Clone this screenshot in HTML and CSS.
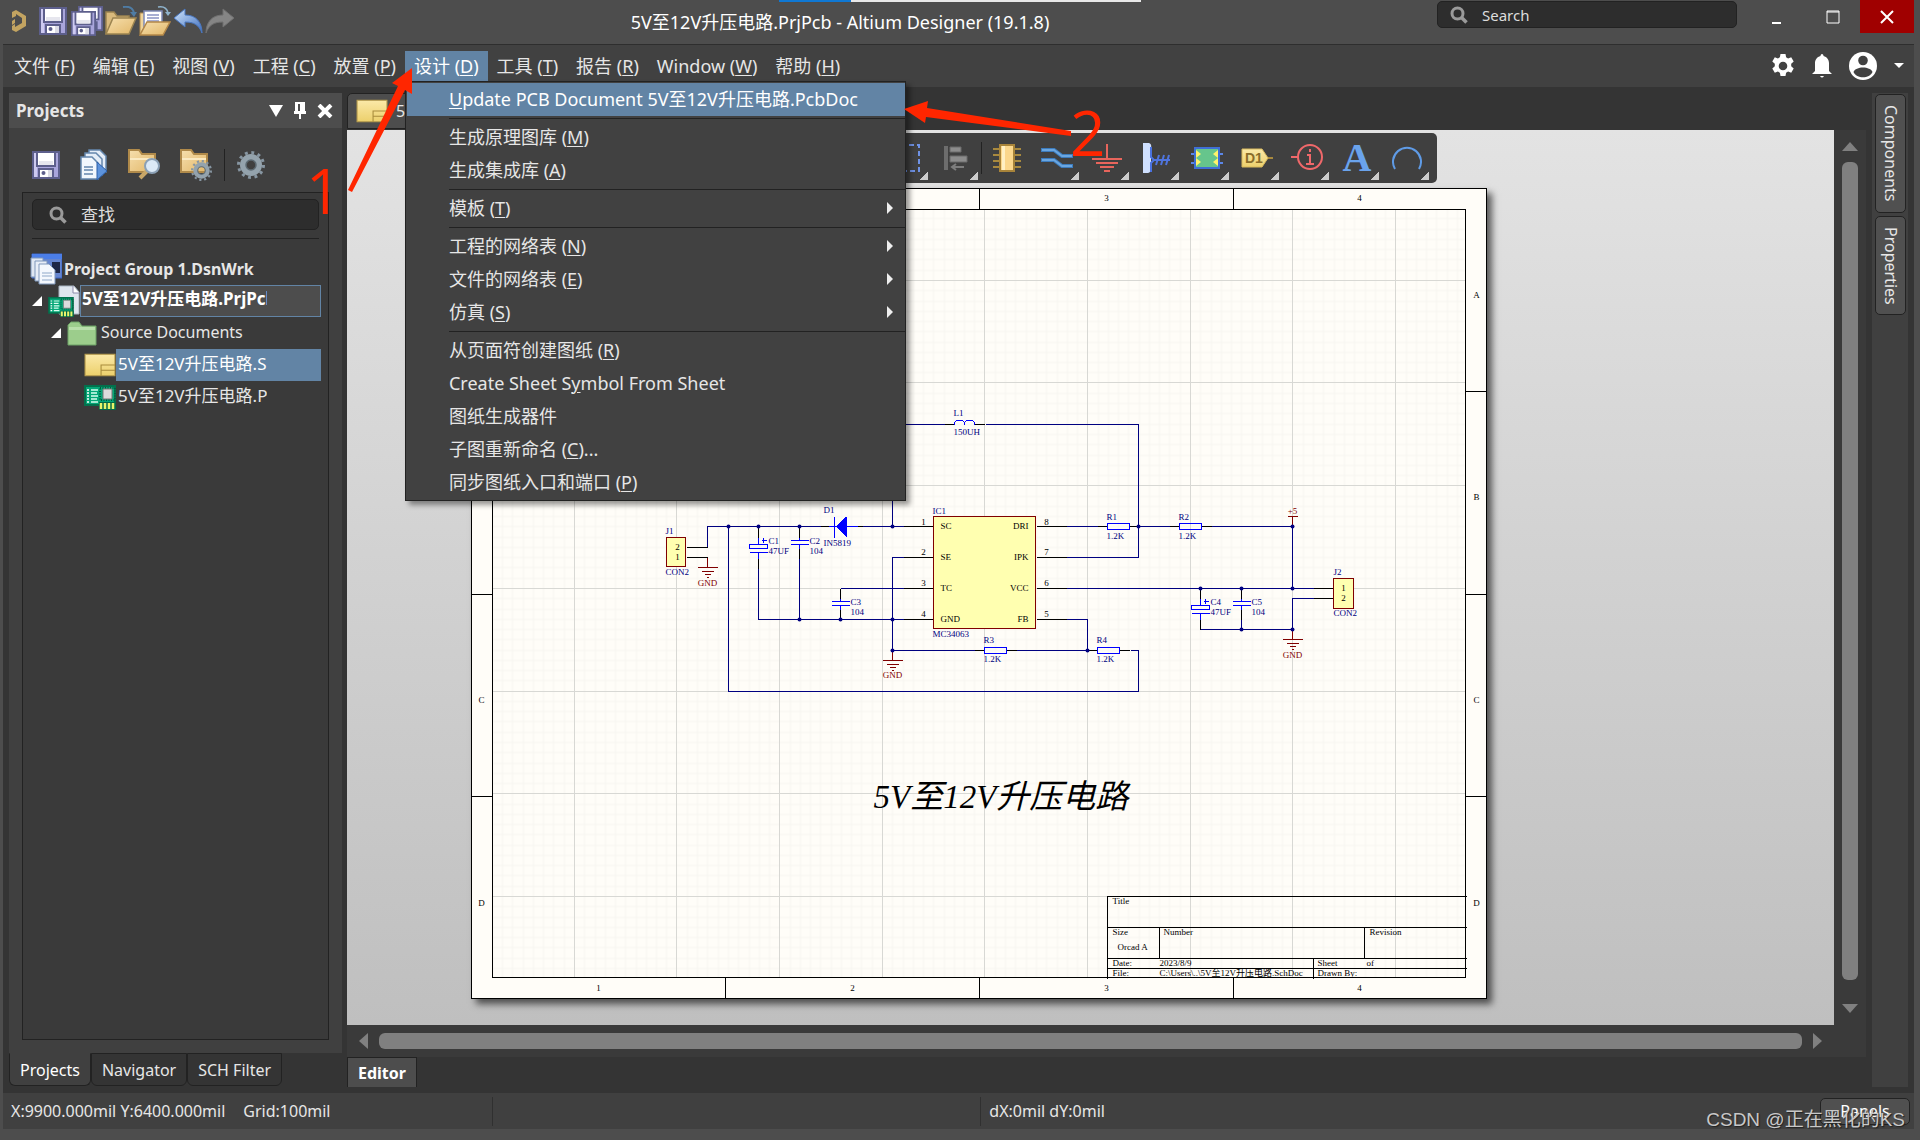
FILE: index.html
```html
<!DOCTYPE html>
<html lang="zh-CN">
<head>
<meta charset="utf-8">
<title>5V至12V升压电路.PrjPcb - Altium Designer (19.1.8)</title>
<link rel="stylesheet" href="styles.css">
</head>
<body>
<svg class="defs" aria-hidden="true">
  <defs>
    <linearGradient id="lilac" x2="1" y2="1"><stop offset="0" stop-color="#c9c6ee"/><stop offset="1" stop-color="#8d89c8"/></linearGradient>
    <linearGradient id="sand" x2="1" y2="1"><stop offset="0" stop-color="#f6dfae"/><stop offset="1" stop-color="#e2b768"/></linearGradient>
    <linearGradient id="gold" x2="0" y2="1"><stop offset="0" stop-color="#fbe9a8"/><stop offset="1" stop-color="#ecd06c"/></linearGradient>
    <linearGradient id="sky" x2="1" y2="1"><stop offset="0" stop-color="#cfe4fb"/><stop offset="1" stop-color="#3f6fc0"/></linearGradient>
    <symbol id="i-save" viewBox="0 0 28 28">
      <path d="M1 1h26v26H1z" fill="#a9a5dc" stroke="#5d5f8c" stroke-width="2"/>
      <path d="M2 2h3v24H2z" fill="#cdcaf0"/>
      <path d="M5 1h18v14H5z" fill="#fff" stroke="#5d5f8c" stroke-width="2"/>
      <path d="M7 10h14v4H7z" fill="#e6e6ee"/>
      <path d="M7 18h14v9H7z" fill="#fff" stroke="#5d5f8c" stroke-width="2"/>
      <path d="M16 19h4v7h-4z" fill="#dcdce6"/><circle cx="11.500" cy="22" r="2" fill="#5d5f8c"/>
    </symbol>
    <symbol id="i-gear" viewBox="0 0 28 28">
      <circle cx="14" cy="14" r="12.500" fill="none" stroke="#8796a2" stroke-width="3" stroke-dasharray="2.900 3.640"/>
      <circle cx="14" cy="14" r="8" fill="none" stroke="#94a3ad" stroke-width="6"/>
      <circle cx="14" cy="14" r="5" fill="none" stroke="#5d6a72" stroke-width="1.500"/>
    </symbol>
    <symbol id="i-folder" viewBox="0 0 28 24">
      <path d="M1 23V1h10l3 4h13v18z" fill="url(#sand)" stroke="#b08a4a" stroke-width="2"/>
      <path d="M2 9h24v2H2z" fill="#fbeac2"/>
    </symbol>
    <symbol id="i-search" viewBox="0 0 18 18">
      <circle cx="7.500" cy="7.500" r="5.500" fill="none" stroke="#9a9a9a" stroke-width="3"/>
      <path d="M11 11l5.500 5.500" stroke="#9a9a9a" stroke-width="3.500"/>
    </symbol>
    <symbol id="i-sch" viewBox="0 0 30 22">
      <path d="M1 1h28v20H1z" fill="url(#gold)" stroke="#bb9f4e" stroke-width="1"/>
      <path d="M16 21V11h13M16 16h13" fill="none" stroke="#a98c3c" stroke-width="1"/>
    </symbol>
    <symbol id="i-pcb" viewBox="0 0 32 25">
      <path d="M1 1h30v19H1z" fill="#05a777" stroke="#03704c" stroke-width="2"/>
      <path d="M3 5h2M3 8h2M3 11h2M3 14h2M3 17h2" stroke="#fff" stroke-width="1.500"/>
      <path d="M7 5h7M7 8h6M7 11h7M7 14h6M7 17h7" stroke="#d8fff0" stroke-width="1.500"/>
      <path d="M16 3h15v12H16z" fill="none" stroke="#035a3e" stroke-width="2" stroke-dasharray="1 1.500"/>
      <path d="M19 4h9v10h-9z" fill="#dcdcdc" stroke="#777"/>
      <path d="M15 17h17v8H15z" fill="#046b49"/>
      <path d="M17 18v6M21 18v6M25 18v6M29 18v6" stroke="#e9f56a" stroke-width="2.500"/>
    </symbol>
    <pattern id="grid" x="266" y="280" width="308" height="308" patternUnits="userSpaceOnUse">
      <path class="grid-minor" d="M10 0v308M21 0v308M31 0v308M41 0v308M51 0v308M62 0v308M72 0v308M82 0v308M92 0v308M113 0v308M123 0v308M133 0v308M144 0v308M154 0v308M164 0v308M175 0v308M185 0v308M195 0v308M216 0v308M226 0v308M236 0v308M246 0v308M257 0v308M267 0v308M277 0v308M287 0v308M298 0v308M0 10h308M0 21h308M0 31h308M0 41h308M0 51h308M0 62h308M0 72h308M0 82h308M0 92h308M0 113h308M0 123h308M0 133h308M0 144h308M0 154h308M0 164h308M0 175h308M0 185h308M0 195h308M0 216h308M0 226h308M0 236h308M0 246h308M0 257h308M0 267h308M0 277h308M0 287h308M0 298h308"/>
    </pattern>
    <g id="gnd"><path d="M0-10V0M-10 0h20M-6 4h12M-3 7h6M-1 10h2"/></g>
    <g id="res"><path class="pin" d="M-10 0H0M22 0h10"/><path class="part" d="M0-3h22v6H0z"/></g>
    <g id="cap"><path class="pin" d="M0 0v10M0 20v11"/><path class="part" d="M0 10v3M-9 13h18M-9 17h18M0 17v4"/></g>
    <g id="ecap"><path class="pin" d="M0 0v10M0 30v11"/><path class="part" d="M0 10v7M-9 17H9v4H-9zM-9 25H9M0 25v6M3 13h5M5 10v5"/></g>
  </defs>
</svg>

<div class="other-window"></div>

<header class="titlebar">
  <div class="quick">
    <svg class="logo" viewBox="0 0 16 24"><path d="M1 9V3l4-2 10 6v10L5 23l-4-2v-4l3-2v3l7-4V9L5 5v2z" fill="#c3a461"/><path d="M1 12l3-2v4l-3 2z" fill="#c3a461"/></svg>
    <button class="save" aria-label="保存"><svg width="28" height="28"><use href="#i-save"/></svg></button>
    <button aria-label="全部保存"><svg width="32" height="30"><use href="#i-save" x="7" y="0" width="25" height="25"/><use href="#i-save" x="0" y="5" width="25" height="25"/></svg></button>
    <button aria-label="打开"><svg width="32" height="30" viewBox="0 0 32 30"><path d="M1 28V6h8l3 4h12v6" fill="#d9ba7c" stroke="#9c8450" stroke-width="1.500"/><path d="M1 28l7-16h23l-7 16z" fill="url(#sand)" stroke="#9c8450" stroke-width="1.500"/><path d="M18 1c7-1 10 1 11 6" fill="none" stroke="#4f7ca4" stroke-width="2"/><path d="M25 6h7l-3 5z" fill="#4f7ca4"/></svg></button>
    <button aria-label="打开工程"><svg width="32" height="30" viewBox="0 0 32 30"><path d="M1 28V7h6v10" fill="#f0d49a" stroke="#b08a4a"/><path d="M5 5h18v20H5z" fill="#fff" stroke="#7d89b5" stroke-width="1.500"/><path d="M8 9h12M8 12h12M8 15h12" stroke="#8a94c4" stroke-width="1.500"/><path d="M1 29l7-13h23l-7 13z" fill="url(#sand)" stroke="#b48848" stroke-width="1.500"/><path d="M19 1c6-1 9 1 10 6" fill="none" stroke="#8fb3cc" stroke-width="1.500"/><path d="M26 6h6l-3 4z" fill="#8fb3cc"/></svg></button>
    <button aria-label="撤销"><svg width="30" height="26" viewBox="0 0 30 26"><path d="M1 10L12 1v6c11 0 17 7 17 18-3-8-8-11-17-11v5z" fill="url(#sky)" stroke="#4a78c2"/></svg></button>
    <button aria-label="重做"><svg width="30" height="26" viewBox="0 0 30 26"><path d="M29 10L18 1v6C7 7 1 14 1 25c3-8 8-11 17-11v5z" fill="#858585" stroke="#707070"/></svg></button>
  </div>
  <h1 class="window-title">5V至12V升压电路.PrjPcb - Altium Designer (19.1.8)</h1>
  <label class="search search-top"><svg width="18" height="18"><use href="#i-search"/></svg><input type="text" placeholder="Search" aria-label="Search"></label>
  <div class="window-buttons">
    <button aria-label="最小化"><svg width="14" height="24"><path d="M1 18h9" stroke="#fff" stroke-width="2"/></svg></button>
    <button aria-label="最大化"><svg width="14" height="14"><path d="M1 1h12v12H1z" fill="none" stroke="#fff" stroke-width="1"/><path d="M1 2h12" stroke="#fff"/></svg></button>
    <button class="close" aria-label="关闭"><svg width="14" height="14"><path d="M1 1l12 12M13 1L1 13" stroke="#fff" stroke-width="2"/></svg></button>
  </div>
</header>

<nav class="menubar">
  <ul class="menus">
    <li><button>文件 (<u>F</u>)</button></li>
    <li><button>编辑 (<u>E</u>)</button></li>
    <li><button>视图 (<u>V</u>)</button></li>
    <li><button>工程 (<u>C</u>)</button></li>
    <li><button>放置 (<u>P</u>)</button></li>
    <li class="open"><button aria-expanded="true">设计 (<u>D</u>)</button>
      <ul class="dropdown">
        <li><button class="active"><u>U</u>pdate PCB Document 5V至12V升压电路.PcbDoc</button></li>
        <li class="rule"></li>
        <li><button>生成原理图库 (<u>M</u>)</button></li>
        <li><button>生成集成库 (<u>A</u>)</button></li>
        <li class="rule"></li>
        <li><button class="sub">模板 (<u>T</u>)</button></li>
        <li class="rule"></li>
        <li><button class="sub">工程的网络表 (<u>N</u>)</button></li>
        <li><button class="sub">文件的网络表 (<u>E</u>)</button></li>
        <li><button class="sub">仿真 (<u>S</u>)</button></li>
        <li class="rule"></li>
        <li><button>从页面符创建图纸 (<u>R</u>)</button></li>
        <li><button>Create Sheet S<u>y</u>mbol From Sheet</button></li>
        <li><button>图纸生成器件</button></li>
        <li><button>子图重新命名 (<u>C</u>)...</button></li>
        <li><button>同步图纸入口和端口 (<u>P</u>)</button></li>
      </ul>
    </li>
    <li><button>工具 (<u>T</u>)</button></li>
    <li><button>报告 (<u>R</u>)</button></li>
    <li><button>Window (<u>W</u>)</button></li>
    <li><button>帮助 (<u>H</u>)</button></li>
  </ul>
  <div class="account">
    <button aria-label="设置"><svg width="24" height="24" viewBox="0 0 24 24"><path fill="#fff" fill-rule="evenodd" d="M9.500 0h5l.6 3.300 2 1.100 3.100-1.200 2.500 4.300-2.500 2.200v2.600l2.500 2.200-2.500 4.300-3.100-1.200-2 1.100-.6 3.300h-5l-.6-3.300-2-1.100-3.100 1.200-2.500-4.300 2.500-2.200V9.700L1.300 7.500l2.500-4.300 3.100 1.200 2-1.100zM12 7.700a4.300 4.300 0 1 0 0 8.600 4.300 4.300 0 0 0 0-8.600z"/></svg></button>
    <button aria-label="通知"><svg width="20" height="24" viewBox="0 0 20 24"><path d="M10 0c1 0 1.500 1 1.500 2C15 3 17 6 17 9v8l3 3H0l3-3V9c0-3 2-6 5.500-7 0-1 .5-2 1.500-2zM8 22h4q-2 3-4 0z" fill="#fff"/></svg></button>
    <button aria-label="账户"><svg width="28" height="28" viewBox="0 0 28 28"><circle cx="14" cy="14" r="14" fill="#fff"/><circle cx="14" cy="8.500" r="4.800" fill="#414141"/><path d="M4.500 20c2-6 17-6 19 0-3 7-16 7-19 0z" fill="#414141"/></svg></button>
    <button aria-label="账户菜单"><svg width="10" height="6"><path d="M0 0h10L5 5z" fill="#fff"/></svg></button>
  </div>
</nav>

<main class="workspace">
  <aside class="side">
    <section class="panel">
      <header class="panel-head"><h2>Projects</h2>
        <button aria-label="选项"><svg width="14" height="12"><path d="M0 0h14L7 12z" fill="#fff"/></svg></button>
        <button aria-label="固定"><svg width="12" height="18"><path d="M1 0h10v9h1v3H7v5H5v-5H0V9h1zM4 2v7h2V2z" fill="#fff" fill-rule="evenodd"/></svg></button>
        <button aria-label="关闭"><svg width="16" height="14"><path d="M2 1l12 12M14 1L2 13" stroke="#fff" stroke-width="4"/></svg></button>
      </header>
      <div class="panel-tools">
        <button aria-label="保存"><svg width="28" height="28"><use href="#i-save"/></svg></button>
        <button aria-label="编译"><svg width="28" height="32" viewBox="0 0 28 32"><path d="M9 1h11l6 6v16H9z" fill="#e4edf8" stroke="#6487ad" stroke-width="1.500"/><path d="M5 4h11l6 6v16H5z" fill="#e4edf8" stroke="#6487ad" stroke-width="1.500"/><path d="M1 8h11l6 6v16H1z" fill="#f2f7fd" stroke="#6487ad" stroke-width="1.500"/><path d="M4 18h9M4 21h9M4 25h9" stroke="#6487ad" stroke-width="1.500"/><path d="M17 13l10 9-10 9z" fill="#5d93dc" stroke="#2b5ea8"/></svg></button>
        <button aria-label="查找文件"><svg width="32" height="32"><use href="#i-folder" width="28" height="24"/><path d="M12 29l7-7" stroke="#c9a768" stroke-width="4"/><circle cx="24" cy="17" r="7" fill="#dbe9f6" stroke="#8ba0b5" stroke-width="2"/></svg></button>
        <button aria-label="工程选项"><svg width="32" height="32"><use href="#i-folder" width="28" height="24"/><use href="#i-gear" x="11" y="11" width="21" height="21"/></svg></button>
        <span class="tool-rule"></span>
        <button aria-label="设置"><svg width="28" height="28"><use href="#i-gear"/></svg></button>
      </div>
      <div class="panel-body">
        <label class="search"><svg width="18" height="18"><use href="#i-search"/></svg><input type="text" placeholder="查找" aria-label="查找"></label>
        <ul class="tree">
          <li class="root"><svg width="32" height="32" viewBox="0 0 32 32"><path d="M2 1h30v24H2z" fill="#6585cf" stroke="#3a64c8"/><path d="M2 1h30v5H2z" fill="#4b7ee8"/><path d="M22 9h8v11h-8z" fill="#1d2747"/><path d="M1 5h12v19H1z" fill="#dfe7f2" stroke="#7f97bb"/><path d="M5 8h12v20H5z" fill="#e8eef7" stroke="#7f97bb"/><path d="M9 11h10l6 6v14H9z" fill="#f4f8fd" stroke="#7f97bb"/><path d="M12 20h10M12 23h10M12 27h10" stroke="#8fa8c8"/></svg><b>Project Group 1.DsnWrk</b></li>
          <li class="project"><svg class="twist" width="10" height="10"><path d="M10 0v10H0z" fill="#fff"/></svg><svg width="32" height="32" viewBox="0 0 32 32"><path d="M11 1h15l5 6v22H11z" fill="#dfe6ee" stroke="#a8b4c0"/><path d="M25 1v7h6" fill="#fff" stroke="#8b8baa"/><use href="#i-pcb" y="12" width="26" height="20"/></svg><span class="name"><b class="clip">5V至12V升压电路.PrjPcb</b></span></li>
          <li class="folder"><svg class="twist" width="10" height="10"><path d="M10 0v10H0z" fill="#fff"/></svg><svg width="30" height="25" viewBox="0 0 30 25"><path d="M1 24V4l3-3h8l3 4h14v19z" fill="#9ccd8c" stroke="#6da166"/><path d="M2 6h26v3H2z" fill="#b9dfab"/></svg><span class="name">Source Documents</span></li>
          <li class="doc selected"><svg width="32" height="24"><use href="#i-sch" width="32" height="24"/></svg><span class="name"><span class="clip">5V至12V升压电路.SchDoc</span></span></li>
          <li class="doc"><svg width="32" height="25"><use href="#i-pcb" width="32" height="25"/></svg><span class="name"><span class="clip">5V至12V升压电路.PcbDoc</span></span></li>
        </ul>
      </div>
    </section>
    <div class="panel-tabs"><button class="current">Projects</button><button>Navigator</button><button>SCH Filter</button></div>
  </aside>

  <section class="editor">
    <div class="doc-tabs"><button><svg width="32" height="24"><use href="#i-sch" width="32" height="24"/></svg><span>5V至12V升压电路.SchDoc</span></button></div>
    <div class="view">
      <div class="canvas">
        <svg class="sheet" width="1016" height="811" viewBox="470.500 187.500 1016 811" role="img" aria-label="5V至12V升压电路">
          <path d="M471 188h1015v810H471z" fill="#fffdf8" stroke="#000"/>
          <path d="M492 209h973v768H492z" fill="url(#grid)"/>
          <path class="grid-major" d="M574 209v768M676 209v768M779 209v768M882 209v768M984 209v768M1087 209v768M1190 209v768M1292 209v768M1395 209v768M492 280h973M492 382h973M492 485h973M492 588h973M492 691h973M492 793h973M492 896h973"/>
          <path class="ink" d="M492 209h973v768H492zM725 188v21M979 188v21M1233 188v21M725 977v21M979 977v21M1233 977v21M471 391h21M471 594h21M471 796h21M1465 391h21M1465 594h21M1465 796h21"/>
          <path class="ink" d="M1107 978V896h359M1107 927h359M1107 958h359M1107 968h359M1159 927v31M1364 927v31M1313 958v20"/>
          <g class="black mid">
            <text x="598" y="200">1</text><text x="852" y="200">2</text><text x="1106" y="200">3</text><text x="1359" y="200">4</text>
            <text x="598" y="990">1</text><text x="852" y="990">2</text><text x="1106" y="990">3</text><text x="1359" y="990">4</text>
            <text x="481" y="297">A</text><text x="481" y="499">B</text><text x="481" y="702">C</text><text x="481" y="905">D</text>
            <text x="1476" y="297">A</text><text x="1476" y="499">B</text><text x="1476" y="702">C</text><text x="1476" y="905">D</text>
          </g>
          <g class="black">
            <text x="1112" y="903">Title</text><text x="1112" y="934">Size</text><text x="1163" y="934">Number</text><text x="1369" y="934">Revision</text><text x="1117" y="949">Orcad A</text>
            <text x="1112" y="965">Date:</text><text x="1159" y="965">2023/8/9</text><text x="1317" y="965">Sheet</text><text x="1366" y="965">of</text>
            <text x="1112" y="975">File:</text><text x="1159" y="975">C:\Users\..\5V至12V升压电路.SchDoc</text><text x="1317" y="975">Drawn By:</text>
          </g>
          <path class="wire" d="M700 424h244M985 424h153v133h-72M892 424v102M707 547v-21h113M728 526v165h410v-41h-8M758 567v52h145M799 557v62M860 526h43M903 557h-11v93h83M840 588h63M1016 650h71v-31h-21M1066 526h31M1138 526h32M1211 526h81v62M1066 588h247M1313 598h-21v31h-92M1241 619v10"/>
          <path class="pin" d="M686 547h21M686 557h21M820 526h10M857 526h5M903 526h30M903 557h30M903 588h30M903 619h30M1036 526h30M1036 557h30M1036 588h30M1036 619h30M944 424h10M974 424h10M1313 588h20M1313 598h20"/>
          <path class="part" d="M828 526h29M834 516v21"/><path d="M835 526l11-10v21z" fill="#00f"/>
          <path d="M954 424c0-6 10-6 10 0c0-6 10-6 10 0" fill="none" stroke="#00f"/>
          <use href="#res" x="984" y="650"/><use href="#res" x="1107" y="526"/><use href="#res" x="1179" y="526"/><use href="#res" x="1097" y="650"/>
          <use href="#cap" x="799" y="527"/><use href="#cap" x="840" y="588"/><use href="#cap" x="1241" y="588"/>
          <use href="#ecap" x="758" y="527"/><use href="#ecap" x="1200" y="588"/>
          <g class="body"><path d="M933 516h102v112H933z"/><path d="M666 537h19v29h-19z"/><path d="M1333 578h20v30h-20z"/></g>
          <g class="power"><use href="#gnd" x="707" y="567"/><use href="#gnd" x="892" y="660"/><use href="#gnd" x="1292" y="639"/><path d="M1292 526v-10M1287 516h10"/></g>
          <g fill="#000080"><circle cx="728" cy="526" r="2"/><circle cx="758" cy="526" r="2"/><circle cx="799" cy="526" r="2"/><circle cx="892" cy="526" r="2"/><circle cx="799" cy="619" r="2"/><circle cx="840" cy="619" r="2"/><circle cx="892" cy="619" r="2"/><circle cx="892" cy="650" r="2"/><circle cx="1138" cy="526" r="2"/><circle cx="1087" cy="650" r="2"/><circle cx="1292" cy="526" r="2"/><circle cx="1200" cy="588" r="2"/><circle cx="1241" cy="588" r="2"/><circle cx="1292" cy="588" r="2"/><circle cx="1241" cy="629" r="2"/><circle cx="1292" cy="629" r="2"/></g>
          <g class="label">
            <text x="665" y="533">J1</text><text x="665" y="574">CON2</text><text x="768" y="543">C1</text><text x="768" y="553">47UF</text><text x="809" y="543">C2</text><text x="809" y="553">104</text>
            <text x="823" y="512">D1</text><text x="823" y="545">IN5819</text><text x="850" y="604">C3</text><text x="850" y="614">104</text>
            <text x="932" y="513">IC1</text><text x="932" y="636">MC34063</text><text x="983" y="642">R3</text><text x="983" y="661">1.2K</text>
            <text x="1106" y="519">R1</text><text x="1106" y="538">1.2K</text><text x="1178" y="519">R2</text><text x="1178" y="538">1.2K</text><text x="1096" y="642">R4</text><text x="1096" y="661">1.2K</text>
            <text x="953" y="415">L1</text><text x="953" y="434">150UH</text><text x="1333" y="574">J2</text><text x="1333" y="615">CON2</text>
            <text x="1210" y="604">C4</text><text x="1210" y="614">47UF</text><text x="1251" y="604">C5</text><text x="1251" y="614">104</text>
          </g>
          <g class="red mid"><text x="707" y="585">GND</text><text x="892" y="677">GND</text><text x="1292" y="657">GND</text><text x="1292" y="513">+5</text></g>
          <g class="black">
            <text x="940" y="528">SC</text><text x="940" y="559">SE</text><text x="940" y="590">TC</text><text x="940" y="621">GND</text>
          </g>
          <g class="black end"><text x="1028" y="528">DRI</text><text x="1028" y="559">IPK</text><text x="1028" y="590">VCC</text><text x="1028" y="621">FB</text></g>
          <g class="black mid">
            <text x="923" y="524">1</text><text x="923" y="554">2</text><text x="923" y="585">3</text><text x="923" y="616">4</text>
            <text x="1046" y="524">8</text><text x="1046" y="554">7</text><text x="1046" y="585">6</text><text x="1046" y="616">5</text>
            <text x="677" y="549">2</text><text x="677" y="559">1</text><text x="1343" y="590">1</text><text x="1343" y="600">2</text>
          </g>
          <text class="caption" x="873" y="807">5V至12V升压电路</text>
        </svg>

        <div class="active-bar">
          <button class="more" aria-label="选择"><svg width="28" height="28"><path d="M1 1h26v26H1z" fill="none" stroke="#6f92e6" stroke-width="2" stroke-dasharray="5 3"/></svg></button>
          <button class="more" aria-label="对齐"><svg width="24" height="26"><path d="M0 1h4v24H0z" fill="#6d6d6d"/><path d="M6 2h11v5H6zM6 11h17v6H6z" fill="#8d8d8d" stroke="#6a6a6a"/><path d="M8 22h12M12 19l-4 3 4 3" fill="none" stroke="#7d7d7d" stroke-width="2"/></svg></button>
          <span class="bar-rule"></span>
          <button aria-label="放置器件"><svg width="28" height="28"><path d="M0 5h28M0 11h28M0 17h28M0 23h28" stroke="#a8893e" stroke-width="2"/><path d="M7 1h14v26H7z" fill="#fbd78c" stroke="#a8843a" stroke-width="2"/><path d="M9 2h3v24H9z" fill="#fff0c4"/></svg></button>
          <button class="more" aria-label="放置线"><svg width="32" height="22"><path d="M0 3h13l8 6h11M0 13h13l8 6h11" fill="none" stroke="#3d7cbd" stroke-width="4"/><path d="M1 3h12l8 6h10M1 13h12l8 6h10" fill="none" stroke="#6aa6e0" stroke-width="2"/></svg></button>
          <button class="more" aria-label="放置地"><svg width="30" height="28"><path d="M15 0v14M0 15h30M4 19h22M8 23h14M12 27h6" stroke="#e8655c" stroke-width="2"/></svg></button>
          <button class="more" aria-label="线束"><svg width="28" height="30"><path d="M0 0h6q3 1 2 5v21q0 3-3 4H0z" fill="#cfe0ff"/><path d="M8 4v10l3 3-3 3v9" fill="none" stroke="#4a72e0" stroke-width="2"/><path d="M10 17h17M16 12l-3 10M21 12l-3 10M26 12l-3 10" stroke="#4f74dd" stroke-width="2"/></svg></button>
          <button class="more" aria-label="图表符"><svg width="32" height="22"><path d="M0 7h32M0 16h32" stroke="#5b86e8" stroke-width="2"/><path d="M4 1h24v20H4z" fill="#66c58c" stroke="#3f6fd6" stroke-width="2"/><path d="M5 3l5 4-5 4 5 4-5 4zM27 3l-5 4 5 4-5 4 5 4z" fill="#fff36b"/></svg></button>
          <button class="more" aria-label="端口"><svg width="32" height="20"><path d="M24 10h8" stroke="#a8893e" stroke-width="2"/><path d="M1 1h20l6 9-6 9H1z" fill="url(#gold)" stroke="#d8b95c"/><text class="port" x="4" y="15">D1</text></svg></button>
          <button class="more" aria-label="指示"><svg width="32" height="28"><circle cx="19" cy="13" r="12" fill="none" stroke="#f0686a" stroke-width="2"/><path d="M0 13h7M19 5v3M16 11h3v9M15 20h8" fill="none" stroke="#f0686a" stroke-width="2"/></svg></button>
          <button class="more letter" aria-label="文本">A</button>
          <button class="more" aria-label="圆弧"><svg width="30" height="24"><path d="M3 23A14 14 0 1 1 27 23" fill="none" stroke="#5f9be6" stroke-width="2"/></svg></button>
        </div>
      </div>
      <div class="scroll vertical"><svg width="16" height="9"><path d="M0 9L8 0l8 9z"/></svg><span class="thumb"></span><svg width="16" height="9"><path d="M0 0h16L8 9z"/></svg></div>
      <div class="scroll horizontal"><svg width="9" height="16"><path d="M9 0v16L0 8z"/></svg><span class="thumb"></span><svg width="9" height="16"><path d="M0 0v16l9-8z"/></svg></div>
    </div>
    <div class="editor-tabs"><button>Editor</button></div>
  </section>

  <aside class="dock"><button>Components</button><button>Properties</button></aside>
</main>

<footer class="status">
  <span>X:9900.000mil Y:6400.000mil</span><span class="grid-size">Grid:100mil</span><span class="delta">dX:0mil dY:0mil</span>
  <button>Panels</button>
</footer>

<svg class="marks" width="840" height="160" viewBox="300 60 840 160" aria-hidden="true">
  <path d="M412 68v26l-7-4-53 102-4-2 50-104-6-3zM904 109l24-8-1 7 144 23v5l-145-19-1 6z"/>
  <text x="306" y="214">1</text><text x="1070" y="156">2</text>
</svg>
<div class="watermark">CSDN @正在黑化的KS</div>
</body>
</html>
```
FILE: styles.css
```css
* { box-sizing: border-box; }

body {
  position: relative;
  display: flex;
  flex-direction: column;
  min-height: 100vh;
  margin: 0;
  padding: 0 6px 11px 3px;
  background: #4d4d4d;
  color: #e6e6e6;
  font: 16px/22px "Noto Sans", "Noto Sans CJK SC", sans-serif;
}

ul { margin: 0; padding: 0; list-style: none; }
h1, h2 { margin: 0; font: inherit; }
svg { display: block; flex: none; }
u { text-decoration-thickness: 1px; text-underline-offset: 2px; }

button {
  padding: 0;
  border: 0;
  background: none;
  color: inherit;
  font: inherit;
  white-space: nowrap;
}

.defs { position: absolute; width: 0; height: 0; }

.other-window {
  position: absolute;
  top: 0;
  left: 779px;
  width: 362px;
  height: 2px;
  background: linear-gradient(90deg, #0f78d4 72px, #e8e8e8 72px);
}

/* title bar */
.titlebar { display: flex; height: 45px; border-bottom: 1px solid #2e2e2e; }
.quick { display: flex; align-items: center; gap: 2px; height: 42px; padding-left: 8px; }
.logo { width: 16px; height: 24px; margin-right: 10px; }
.quick .save { margin-right: 2px; }
.window-title { flex: 1; padding: 11px 0 0 8px; text-align: center; font-size: 18px; color: #fff; }

.search {
  display: flex;
  align-items: center;
  gap: 14px;
  height: 31px;
  padding-left: 16px;
  border: 1px solid #222;
  border-radius: 5px;
  background: #2d2d2d;
}
.search input { flex: 1; min-width: 0; padding: 0; border: 0; outline: 0; background: none; color: #ddd; font: inherit; font-size: 17px; }
.search input::placeholder { color: #ddd; opacity: 1; }
.search-top { width: 300px; height: 27px; margin-top: 1px; padding-left: 12px; }
.search-top input { font-size: 15px; }

.window-buttons { display: flex; height: 33px; padding-left: 13px; }
.window-buttons button { display: grid; place-items: center; width: 55px; }
.window-buttons .close { width: 54px; background: #a00000; }

/* menu bar */
.menubar { display: flex; justify-content: space-between; height: 42px; background: #414141; }
.menus { display: flex; padding: 6px 0 0 2px; font-size: 18px; }
.menus > li > button { height: 30px; padding: 0 9px; line-height: 30px; }
.open { position: relative; }
.open > button { background: #6284a5; color: #fff; }

.dropdown {
  position: absolute;
  z-index: 2;
  top: 30px;
  left: 0;
  width: 501px;
  padding: 1px 0 1px 1px;
  border: 1px solid #222;
  background: #414141;
  box-shadow: 4px 4px 5px rgba(0, 0, 0, .4);
}
.dropdown button { position: relative; display: block; width: 100%; height: 33px; padding: 0 0 2px 42px; text-align: left; }
.dropdown .active { background: #6284a5; color: #fff; }
.dropdown .sub::after {
  content: "";
  position: absolute;
  top: 10px;
  right: 12px;
  border: solid transparent;
  border-width: 6px 0 6px 6px;
  border-left-color: #eee;
}
.rule { height: 1px; margin: 2px 0 2px 42px; background: #222; }

.account { display: flex; align-items: center; gap: 17px; padding-right: 10px; }

/* work area */
.workspace { display: flex; flex: 1; padding: 6px; background: #343434; }
.side { display: flex; flex-direction: column; width: 333px; margin-right: 5px; }
.panel { display: flex; flex: 1; flex-direction: column; padding-bottom: 13px; background: #404040; }
.panel-head { display: flex; align-items: center; gap: 11px; height: 35px; padding: 0 9px 0 7px; background: #4d4d4d; }
.panel-head h2 { flex: 1; font-size: 17px; font-weight: 700; }
.panel-tools { display: flex; align-items: center; height: 64px; padding: 10px 0 0 23px; gap: 20px; }
.tool-rule { width: 1px; height: 32px; margin: 0 -8px; background: #222; }
.panel-body { flex: 1; margin: 0 13px; padding: 6px 9px; border: 1px solid #222; background: #3a3a3a; }

.tree { margin-top: 8px; padding-top: 14px; border-top: 1px solid #222; }
.tree li { display: flex; align-items: center; gap: 2px; height: 32px; margin-right: -2px; white-space: nowrap; }
.tree .name { flex: 1; height: 32px; padding: 3px 2px; line-height: 24px; }
.clip { display: block; width: 149px; overflow: hidden; font-size: 17px; }
.root { margin-left: -2px; }
.tree .project { gap: 0; }
.project svg + svg { margin-left: 6px; }
.tree .project .name { padding: 1px; border: 1px solid #6284a5; background: #4d4d4d; color: #fff; }
.project .clip { width: 185px; }
.folder { margin-left: 19px; }
.folder svg + svg { margin-left: 4px; }
.doc { margin-left: 52px; }
.tree .doc { gap: 0; }
.selected .name { background: #6284a5; color: #fff; }

.panel-tabs { display: flex; height: 34px; }
.panel-tabs button { height: 33px; padding: 0 10px; border: 1px solid #222; border-radius: 0 0 6px 6px; }
.panel-tabs .current { border-top-color: #404040; background: #404040; color: #fff; }

/* schematic editor */
.editor { display: flex; flex: 1; flex-direction: column; min-width: 0; }
.doc-tabs { height: 37px; }
.doc-tabs button { display: flex; align-items: center; gap: 8px; height: 36px; padding: 0 8px; border: 1px solid #222; border-radius: 5px 5px 0 0; background: #4d4d4d; }
.view { display: grid; flex: 1; grid-template: minmax(0, 1fr) 32px / minmax(0, 1fr) 32px; background: #3a3a3a; }
.canvas { position: relative; overflow: hidden; min-height: 880px; background: linear-gradient(#e3e3e3, #bfbfbf); }
.sheet { position: absolute; top: 58px; left: 124px; box-shadow: 5px 5px 7px rgba(0, 0, 0, .6); font: 9px "Liberation Serif", "Noto Sans CJK SC", serif; shape-rendering: crispEdges; }
.sheet circle { shape-rendering: auto; }
.grid-minor, .grid-major, .ink, .wire, .pin, .part { fill: none; stroke-width: 1; }
.grid-minor { stroke: #f6f5f0; }
.grid-major { stroke: #d8d8d4; }
.ink, .pin { stroke: #000; }
.wire { stroke: #000080; }
.part { stroke: #00f; }
.body { fill: #ffffb0; stroke: #800000; }
.power { fill: none; stroke: #800000; }
.label { fill: #000080; }
.red { fill: #800000; }
.black { fill: #000; }
.mid { text-anchor: middle; }
.end { text-anchor: end; }
.caption { font-size: 33px; font-style: italic; }

.active-bar {
  position: absolute;
  top: 3px;
  right: 0;
  left: 0;
  display: flex;
  justify-content: flex-end;
  width: 693px;
  height: 50px;
  margin: 0 auto;
  padding-right: 5px;
  border-radius: 5px;
  background: #404040;
}
.active-bar button { position: relative; display: grid; place-items: center; width: 50px; }
.active-bar .more::after {
  content: "";
  position: absolute;
  right: 3px;
  bottom: 3px;
  width: 8px;
  height: 8px;
  background: linear-gradient(135deg, transparent 50%, #ccc 50%);
}
.bar-rule { width: 1px; height: 32px; margin-top: 9px; background: #222; }
.active-bar .letter { color: #6aa3ec; font: 700 40px/50px "Liberation Serif", serif; }
.port { fill: #8a6d2a; font: 700 14px "Liberation Sans", sans-serif; }

.scroll { display: flex; align-items: center; fill: #808080; }
.thumb { flex: 1; border-radius: 6px; background: #808080; }
.vertical { flex-direction: column; gap: 11px; padding-top: 12px; padding-bottom: 12px; }
.vertical .thumb { width: 16px; margin-bottom: 13px; }
.horizontal { gap: 11px; padding: 0 12px; }
.horizontal .thumb { height: 16px; }
.editor-tabs { height: 30px; }
.editor-tabs button { height: 30px; padding: 1px 10px 0; border: 1px solid #222; border-bottom: 0; background: #4d4d4d; color: #fff; font-weight: 700; }

.dock { display: flex; flex-direction: column; align-items: center; gap: 3px; width: 36px; margin-left: 6px; padding-top: 1px; background: #404040; }
.dock button { width: 31px; padding: 10px 0; border: 1px solid #222; border-radius: 5px; background: #505050; line-height: 29px; writing-mode: vertical-rl; }

/* status bar */
.status { display: flex; align-items: center; height: 36px; padding: 0 4px 0 8px; background: #404040; }
.grid-size { width: 250px; margin-left: 18px; border-right: 1px solid #303030; line-height: 29px; }
.delta { margin-left: 487px; padding-left: 8px; border-left: 1px solid #303030; line-height: 29px; }
.status button { width: 90px; height: 27px; margin-left: auto; border: 1px solid #222; border-radius: 5px; background: #505050; color: #fff; }

/* annotations on top of the window */
.marks { position: absolute; z-index: 3; top: 60px; left: 300px; overflow: visible; fill: #ff2600; font: 62px "Open Sans", sans-serif; pointer-events: none; }
.watermark {
  position: absolute;
  right: 15px;
  bottom: 6px;
  color: #c8c8c8;
  font: 19px/28px "Liberation Sans", "Noto Sans CJK SC", sans-serif;
  text-shadow: 1px 1px 1px #222;
  pointer-events: none;
}
```
